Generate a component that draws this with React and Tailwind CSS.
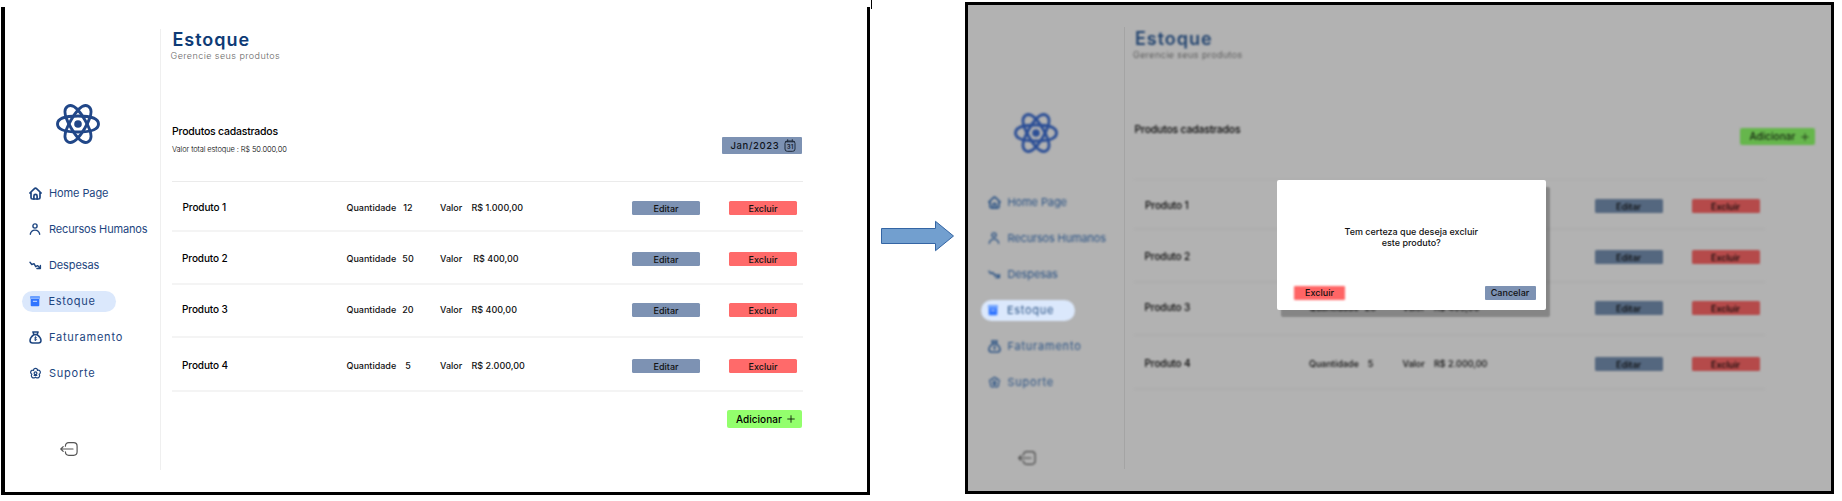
import React from "react";

const orbit = "M1.500 20C1.500 14.600 9.500 12 22 12S42.500 14.600 42.500 20 34.500 28 22 28 1.500 25.400 1.500 20z";

function AtomLogo({ className }) {
  return (
    <svg viewBox="0 0 44 40" className={className} fill="none" stroke="currentColor" strokeWidth="2.9">
      <path d={orbit} />
      <path d={orbit} transform="rotate(60 22 20)" />
      <path d={orbit} transform="rotate(120 22 20)" />
      <circle cx="22" cy="20" r="3.8" fill="currentColor" stroke="none" />
    </svg>
  );
}

const iconPaths = {
  home: (
    <g strokeWidth="1.7">
      <path d="M.9 6 5.200 1.800Q6.500.6 7.800 1.800L12.100 6M2 5.400v5.200Q2 12 3.400 12h6.200q1.400 0 1.400-1.400V5.400" />
      <path d="M4.900 12V9a1.600 1.600 0 0 1 3.200 0v3" />
    </g>
  ),
  person: (
    <g strokeWidth="1.4">
      <circle cx="6" cy="3" r="2.100" />
      <path d="M1.300 11.200C1.800 8.500 3.600 7.100 6 7.100s4.200 1.400 4.700 4.100" />
    </g>
  ),
  trend: (
    <g strokeWidth="1.400">
      <path d="M1 3.300 2.800 5.500 5 4.700 6.700 7.700 8.500 6.600 11.300 9.300M11.400 6.400v3.100H7.900" />
    </g>
  ),
  box: (
    <g stroke="none">
      <path d="M1 1.800Q1 1 1.800 1h8.400q.8 0 .8.800v2H1z" fill="#6ba0ff" />
      <path d="M1.700 4h8.600v6.200q0 1-1 1H2.700q-1 0-1-1z" fill="#2f74ff" />
      <path d="M4.300 6.300h3.400" stroke="#cfe0ff" strokeWidth="1" />
    </g>
  ),
  bag: (
    <g strokeWidth="1.500">
      <path d="M3.900.900h5.200l-1 2.700H4.900zM4.900 3.700C2.500 5.500 1 7.600 1 9.500 1 11.300 2.100 12 3.600 12h5.800C10.900 12 12 11.300 12 9.500c0-1.900-1.500-4-3.900-5.800z" />
      <path d="M7.700 6.600C7 6.100 5.500 6.200 5.500 7c0 .9 2.100.6 2.100 1.500 0 .8-1.500.9-2.300.3M6.500 5.600v4" strokeWidth=".8" />
    </g>
  ),
  flower: (
    <g strokeWidth="1.200">
      <path d="M4.500 3.400a2 2 0 1 1 4 0 2 2 0 1 1 1.600 3.800 2 2 0 1 1-3.600 2.900 2 2 0 1 1-3.600-2.900A2 2 0 1 1 4.500 3.400z" />
      <circle cx="6.500" cy="6.300" r="1.400" />
      <path d="M5.200 8.400h2.600" />
    </g>
  ),
};

function NavIcon({ name }) {
  return (
    <svg viewBox="0 0 13 13" className="h-[13px] w-[13px] shrink-0" fill="none" stroke="currentColor" strokeLinejoin="round" strokeLinecap="round">
      {iconPaths[name]}
    </svg>
  );
}

function ExitIcon() {
  return (
    <svg viewBox="0 0 18 14" className="h-[14px] w-[18px]" fill="none" stroke="currentColor" strokeWidth="1.200" strokeLinecap="round" strokeLinejoin="round">
      <path d="M5.400 4.200Q5.400.700 8.800.700h4.800q3.500 0 3.500 3.500v5.600q0 3.500-3.500 3.500H8.800q-3.400 0-3.400-3.500M13 7H.9M3.200 4.600.8 7l2.400 2.400" />
    </svg>
  );
}

function CalendarIcon() {
  return (
    <svg viewBox="0 0 12 13" className="-mt-px h-[13px] w-[12px]" fill="none" stroke="#1f2a3a" strokeLinecap="round">
      <rect x="1" y="2" width="10" height="10.300" rx="2.300" strokeWidth="1" />
      <path d="M1.500 2.800h9M3.700.7v2M8.300.7v2" strokeWidth="1" />
      <text x="6" y="9.800" textAnchor="middle" fontSize="6" fontWeight="700" fill="#1f2a3a" stroke="none" className="font-['Inter'] tracking-normal">31</text>
    </svg>
  );
}

function Plus() {
  return (
    <svg viewBox="0 0 8 8" className="h-2 w-2" stroke="currentColor" strokeWidth=".8">
      <path d="M4 .3v7.400M.3 4h7.400" />
    </svg>
  );
}

const nav = [
  { icon: "home", label: "Home Page", cls: "h-[35px] tracking-[-0.1px]" },
  { icon: "person", label: "Recursos Humanos", cls: "h-[36px] tracking-[-0.160px]" },
  { icon: "trend", label: "Despesas", cls: "h-[36px] tracking-[-0.120px]" },
  { icon: "box", label: "Estoque", cls: "h-[36px] tracking-[0.700px]", active: true },
  { icon: "bag", label: "Faturamento", cls: "h-[36px] tracking-[0.78px]" },
  { icon: "flower", label: "Suporte", cls: "h-[36px] tracking-[0.75px]" },
];

const products = [
  { name: "Produto 1", qty: "12", price: "R$ 1.000,00", row: "h-[50px] pt-[19px]", pad: "pl-[11px]", pricePad: "" },
  { name: "Produto 2", qty: "50", price: "R$ 400,00", row: "h-[53px] pt-5", pad: "pl-[10.500px]", pricePad: "pl-[1.700px]" },
  { name: "Produto 3", qty: "20", price: "R$ 400,00", row: "h-[53px] pt-[18px]", pad: "pl-[10.500px]", pricePad: "" },
  { name: "Produto 4", qty: "5", price: "R$ 2.000,00", row: "h-[54px] pt-[21px]", pad: "pl-[10.500px]", pricePad: "" },
];

function Sidebar({ dim }) {
  return (
    <aside className={dim ? "w-[155.500px] shrink-0 pt-[108px] text-[#2b5385] blur-[1px]" : "w-[155px] shrink-0 pt-[97px] text-[#1d4580]"}>
      <AtomLogo className={dim ? "ml-[46px] h-10 w-11 text-[#2c4f96]" : "ml-[51px] h-10 w-11 text-[#214788]"} />
      <nav className={dim ? "mt-[32px] pl-[12.500px]" : "mt-[32px] pl-[17px]"}>
        {nav.map((n) => (
          <div key={n.label} className={"flex items-center text-[11px] whitespace-nowrap " + n.cls}>
            <div className={n.active ? "flex h-[21px] w-[94px] items-center gap-[7px] rounded-full bg-[#dbe8fc] pl-[6.500px]" : "flex items-center gap-[7px] pl-[7px]"}>
              <NavIcon name={n.icon} />
              <span>{n.label}</span>
            </div>
          </div>
        ))}
      </nav>
      <div className={dim ? "mt-[51px] ml-[50px] text-[#444444]" : "mt-[51px] ml-[55px] text-[#555555]"}>
        <ExitIcon />
      </div>
    </aside>
  );
}

function AddButton({ dim }) {
  return (
    <button className={"flex w-[75px] items-center rounded-[2px] pl-[9.500px] text-[10px] font-medium " + (dim ? "h-[17px] bg-[#66b64c] text-[#142410] blur-[1px]" : "h-[18px] bg-[#93ff6d] text-black")}>
      <span className="w-[51px] text-left tracking-[0.02px]">Adicionar</span>
      <Plus />
    </button>
  );
}

function ProductRow({ p, dim }) {
  const btn = "flex h-[14px] w-[68px] items-center justify-center rounded-[1.500px] pt-[2px] ";
  return (
    <li className={"border-b-2 text-[9px] font-medium " + (dim ? "border-[#adadad] text-[#080808] " : "border-[#f4f4f4] text-[#111111] ") + p.row}>
      <div className="flex h-[14px] items-center whitespace-nowrap">
        <span className={"-mt-px w-[175px] text-[10px] tracking-[-0.1px] text-black " + p.pad}>{p.name}</span>
        <span className="w-[51.500px]">Quantidade</span>
        <span className="w-[20px] text-center">{p.qty}</span>
        <span className="ml-[22px] w-[31.500px]">Valor</span>
        <span className={"w-[160.500px] " + p.pricePad}>{p.price}</span>
        <button className={btn + (dim ? "bg-[#54677f]" : "bg-[#7d92b3]")}>Editar</button>
        <button className={"ml-[29px] " + btn + (dim ? "bg-[#b54a4a]" : "bg-[#ff6a6a]")}>Excluir</button>
      </div>
    </li>
  );
}

function Content({ dim }) {
  return (
    <main className={dim ? "flex grow flex-col pt-[23px] pl-[9.500px]" : "flex grow flex-col pt-[22px] pl-[10.500px]"}>
      <div className={dim ? "blur-[1px]" : ""}>
        <h1 className={"ml-px h-[22px] text-[18px] leading-[22px] font-semibold tracking-[0.950px] " + (dim ? "text-[#21436f]" : "text-[#0e3b76]")}>Estoque</h1>
        <p className={"-mt-px -ml-px h-[13px] text-[9px] leading-3 font-light tracking-[0.440px] " + (dim ? "text-[#404040]" : "text-[#666666]")}>Gerencie seus produtos</p>
      </div>
      <div className={dim ? "flex h-[117px] pt-[60px]" : "flex h-[118px] pt-[61px]"}>
        <div className={dim ? "grow blur-[1px]" : "grow"}>
          <h2 className="ml-[0.500px] h-4 text-[10.500px] leading-4 font-medium tracking-[-0.220px] text-black">Produtos cadastrados</h2>
          {!dim && <p className="mt-[4px] ml-[0.500px] text-[7.500px] leading-3 font-light tracking-[-0.110px] text-black">Valor total estoque : R$ 50.000,00</p>}
        </div>
        {dim ? (
          <div className="pt-[6px] pr-[16px]"><AddButton dim /></div>
        ) : (
          <button className="mt-[13px] mr-[65px] flex h-[17px] w-[80px] items-center rounded-[1px] bg-[#7d92b3] pl-[8.500px] text-[9.500px] font-medium tracking-[0.620px] text-[#10151d]">
            <span className="w-[53.500px] pt-px text-left">Jan/2023</span>
            <CalendarIcon />
          </button>
        )}
      </div>
      <ul className={"w-[631px] border-t " + (dim ? "border-[#adadad] blur-[1px]" : "border-[#ebebeb]")}>
        {products.map((p) => <ProductRow key={p.name} p={p} dim={dim} />)}
      </ul>
      {!dim && <div className="mt-[18px] flex w-[630px] justify-end"><AddButton /></div>}
    </main>
  );
}

function DeleteDialog() {
  return (
    <div role="dialog" className="absolute top-[175px] left-[309px] flex h-[130px] w-[268.500px] flex-col items-center rounded-[2px] bg-white shadow-[4px_7px_2px_rgba(0,0,0,0.25)]">
      <p className="mt-[47px] w-[160px] text-center text-[9px] leading-[10.500px] font-medium text-[#111111]">Tem certeza que deseja excluir<br />este produto?</p>
      <div className="mt-[38px] flex w-full justify-between pr-[10px] pl-[17px] text-[9px] font-medium text-[#111111]">
        <button className="relative flex h-[14px] w-[51px] items-center justify-center">
          <span className="absolute inset-0 rounded-[1px] bg-[#ff6565] blur-[1px]" />
          <span className="relative">Excluir</span>
        </button>
        <button className="flex h-[13.500px] w-[51px] items-center justify-center rounded-[1px] bg-[#7d92b3]">Cancelar</button>
      </div>
    </div>
  );
}

export default function App() {
  return (
    <div className="flex h-[501px] w-[1842px] overflow-hidden bg-white font-['Inter',sans-serif]">
      <section className="mt-[7px] ml-px flex h-[488px] w-[869px] shrink-0 border-r-[3px] border-b-[3px] border-l-4 border-black bg-white">
        <Sidebar />
        <div className="mt-[22px] h-[441px] w-px shrink-0 bg-[#efefef]" />
        <Content />
      </section>
      <div className="ml-[1px] h-[9px] w-px shrink-0 bg-black" />
      <div className="flex w-[93px] shrink-0 pt-[220px] pl-[9px]">
        <svg viewBox="0 0 75 32" className="h-8 w-[75px]">
          <path d="M.5 8.500h54V1.300L72.500 16 54.500 30.700v-7.200H.5z" fill="#729fcf" stroke="#3465a4" />
        </svg>
      </div>
      <section className="relative mt-[2px] flex h-[492px] w-[869px] shrink-0 border-[3px] border-black bg-[#b2b2b2]">
        <Sidebar dim />
        <div className="mt-[22px] h-[442px] w-px shrink-0 bg-[#a4a4a4]" />
        <Content dim />
        <DeleteDialog />
      </section>
    </div>
  );
}
